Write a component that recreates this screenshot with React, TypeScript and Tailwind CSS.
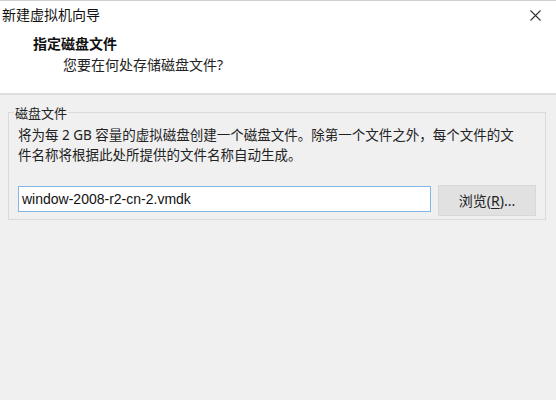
import React from 'react';

const cjk = "font-['Noto_Sans','Noto_Sans_CJK_SC',sans-serif]";

const App: React.FC = () => {
  return (
    <div className={`flex h-[400px] w-[556px] flex-col overflow-hidden bg-[#f0f0f0] text-[#1a1a1a] ${cjk}`}>
      {/* title bar + wizard header */}
      <div className="flex h-[95px] shrink-0 flex-col border-t border-b-2 border-t-[#cfcfcf] border-b-[#dedede] bg-white">
        <div className="flex h-[27px] items-center justify-between pl-[2px] pr-[15px]">
          <span className="text-[14px] leading-none text-[#111]">新建虚拟机向导</span>
          <svg width="11" height="11" viewBox="0 0 11 11" className="mt-[1px]">
            <path d="M0.5 0.5 L10.5 10.5 M10.5 0.5 L0.5 10.5" stroke="#333" strokeWidth="1.1" fill="none" />
          </svg>
        </div>
        <div className="pl-[33px] pt-[8px] text-[14px] font-bold leading-[16px] text-[#111]">指定磁盘文件</div>
        <div className="pl-[63px] pt-[5px] text-[14px] leading-[16px] text-[#222]">您要在何处存储磁盘文件?</div>
      </div>

      <div className="px-[8px] pt-[17px]">
        {/* group box */}
        <div className="flex h-[108px] w-[538px] flex-col border border-[#dadada]">
          <div className="-mt-[8px] ml-[5px] h-[16px] w-fit bg-[#f0f0f0] px-[1px] text-[13px] leading-[16px] text-[#222]">磁盘文件</div>
          <div className="mt-[4px] pl-[9px] text-[13.5px] leading-[20px] whitespace-nowrap text-[#222]">
            <div>将为每 2 GB 容量的虚拟磁盘创建一个磁盘文件。除第一个文件之外，每个文件的文</div>
            <div>件名称将根据此处所提供的文件名称自动生成。</div>
          </div>
          <div className="mt-[20px] flex items-center pl-[9px]">
            <div className="mb-[3px] flex h-[26px] w-[413px] items-center border border-[#84b6e4] bg-white pl-[3px] font-['Liberation_Sans',sans-serif] text-[14px] text-[#111]">
              window-2008-r2-cn-2.vmdk
            </div>
            <button className="ml-[7px] h-[31px] w-[98px] border border-[#d8d8d8] bg-[#e1e1e1] text-[14px] text-[#222]">
              浏览(<span className="underline underline-offset-2">R</span>)...
            </button>
          </div>
        </div>
      </div>
    </div>
  );
};

export default App;
